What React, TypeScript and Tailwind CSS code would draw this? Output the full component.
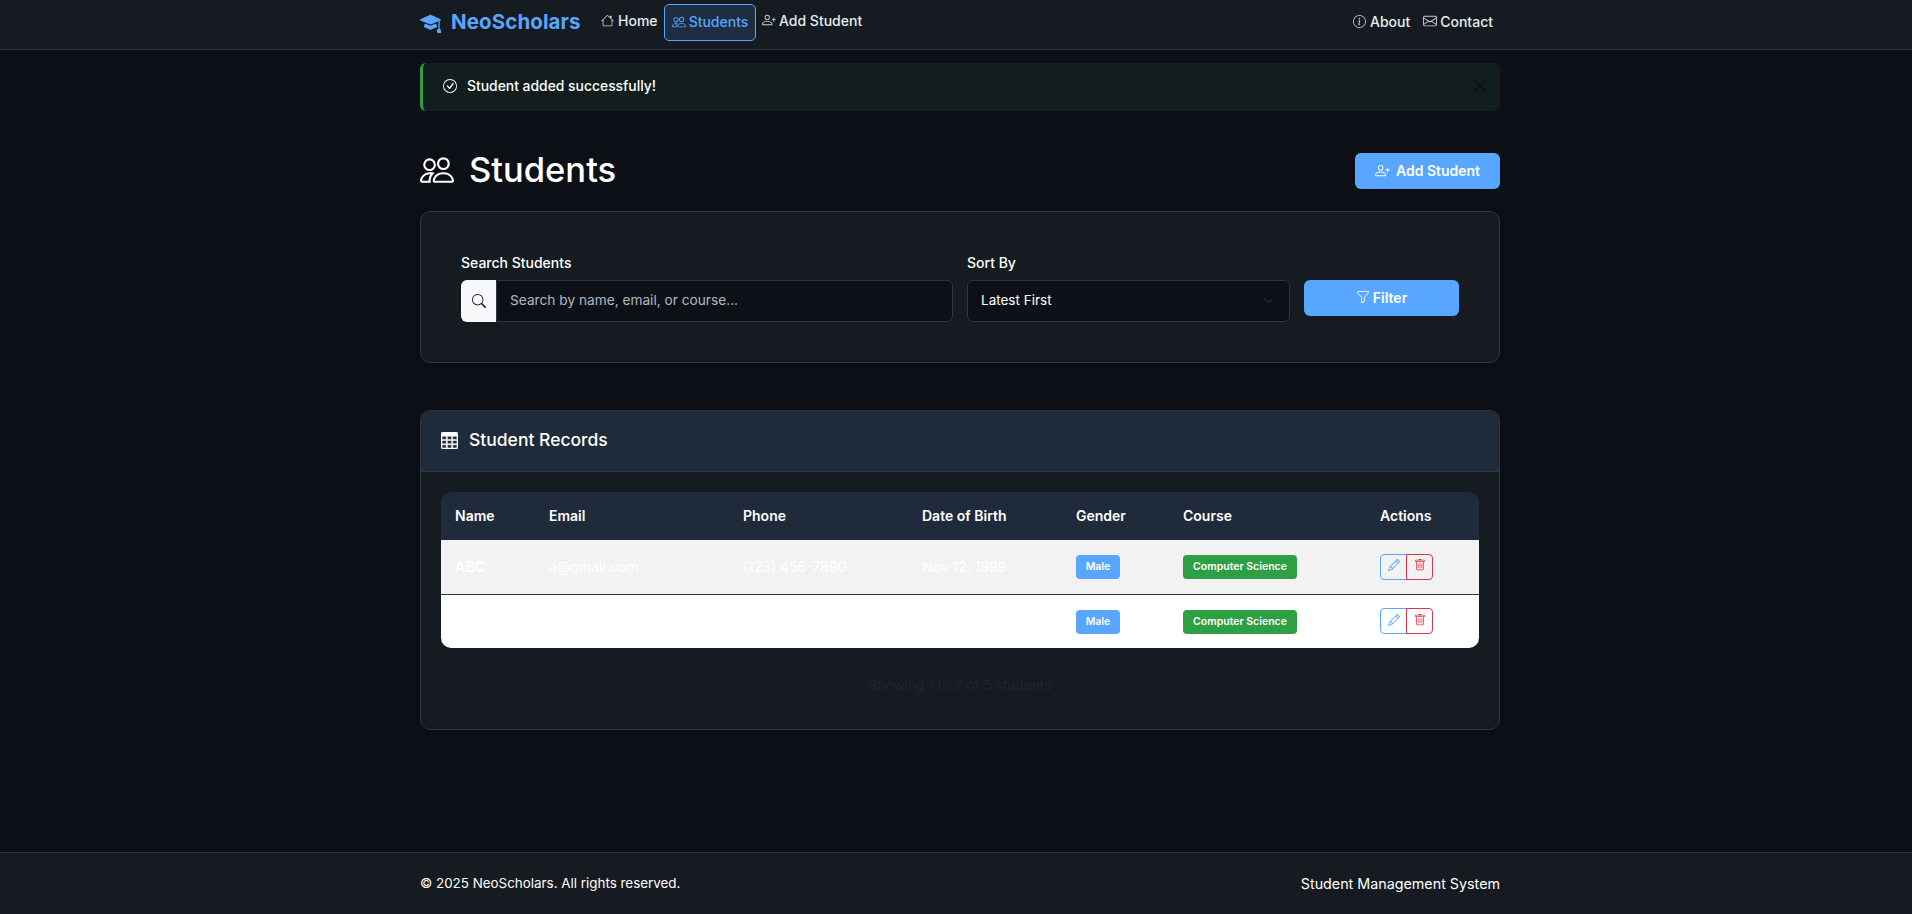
import {
  BsCheckCircle,
  BsChevronDown,
  BsEnvelope,
  BsFunnel,
  BsHouse,
  BsInfoCircle,
  BsMortarboardFill,
  BsPencil,
  BsPeople,
  BsPersonPlus,
  BsSearch,
  BsTable,
  BsTrash,
  BsX,
} from 'react-icons/bs';

const students = [
  { name: 'ABC', email: 'a@gmail.com', phone: '(123) 456-7890', dob: 'Nov 12, 1999', bg: 'bg-[#f2f2f2]' },
  { name: '', email: '', phone: '', dob: '', bg: 'bg-white' },
];

function Actions() {
  return (
    <div className="flex">
      <button className="flex h-[26px] w-[27px] items-center justify-center rounded-l-[4px] border border-[#58a6ff] pb-[3px] text-[#58a6ff]">
        <BsPencil size={12} />
      </button>
      <button className="-ml-px flex h-[26px] w-[27px] items-center justify-center rounded-r-[4px] border border-[#dc3545] pb-[3px] text-[#dc3545]">
        <BsTrash size={12} />
      </button>
    </div>
  );
}

export default function App() {
  return (
    <div className="flex min-h-screen flex-col bg-[#0d1117] font-['Inter',sans-serif] text-white">
      <nav className="h-[50px] border-b border-[#30363d] bg-[#161b22]">
        <div className="ml-[420px] flex h-[49px] w-[1080px] items-center pb-[4px]">
          <BsMortarboardFill size={21} className="text-[#58a6ff]" />
          <span className="ml-[10px] w-[129px] text-[20.5px] font-bold tracking-[0.1px] text-[#58a6ff]">NeoScholars</span>
          <div className="ml-[21px] flex items-center text-[14px] font-medium text-[#e6edf3]">
            <a className="mb-[5px] flex w-[63px] items-center gap-[4px]">
              <BsHouse size={13} className="text-[#c9d1d9]" />
              Home
            </a>
            <a className="flex h-[37px] w-[92px] items-center justify-center gap-[3px] rounded-[5px] border border-[#58a6ff] bg-[#1f2d42] pb-[2px] text-[#58a6ff]">
              <BsPeople size={14} />
              Students
            </a>
            <a className="mb-[5px] ml-[6px] flex items-center gap-[3px]">
              <BsPersonPlus size={14} className="text-[#c9d1d9]" />
              Add Student
            </a>
          </div>
          <div className="ml-auto flex items-center gap-[13px] pb-[3px] pr-[7px] text-[14px] font-medium text-[#e6edf3]">
            <a className="flex items-center gap-[4px]">
              <BsInfoCircle size={13} className="text-[#c9d1d9]" />
              About
            </a>
            <a className="flex items-center gap-[3px]">
              <BsEnvelope size={14} className="text-[#c9d1d9]" />
              Contact
            </a>
          </div>
        </div>
      </nav>

      <main className="ml-[420px] w-[1080px] flex-1">
        <div className="mt-[13px] flex h-[48px] items-center rounded-[6px] border-l-[3px] border-[#2ea043] bg-[#121d1e] pb-[2px] pl-[20px] pr-[5px] text-[13.9px] font-medium">
          <BsCheckCircle size={14} />
          <span className="ml-[10px]">Student added successfully!</span>
          <BsX size={30} className="ml-auto text-[#0b1512]" />
        </div>

        <div className="mt-[42px] flex h-[36px] items-center justify-between">
          <h1 className="mb-[2px] flex items-center gap-[15px] text-[34.5px] font-medium">
            <BsPeople size={34} />
            Students
          </h1>
          <button className="flex h-[36px] w-[145px] items-center justify-center gap-[6px] rounded-[6px] bg-[#58a6ff] pb-[2px] text-[14px] font-semibold">
            <BsPersonPlus size={15} />
            Add Student
          </button>
        </div>

        <section className="mt-[22px] flex h-[152px] gap-[14px] rounded-[10px] border border-[#30363d] bg-[#161b22] pl-[40px] pr-[40px] pt-[41px] shadow-[0_4px_12px_rgba(0,0,0,0.3)]">
          <div className="w-[492px]">
            <label className="block text-[14px] font-medium leading-[20px]">Search Students</label>
            <div className="mt-[7px] flex h-[42px]">
              <div className="flex w-[35px] items-center justify-center rounded-l-[6px] bg-[#f8f9fa] text-[#212529]">
                <BsSearch size={14} />
              </div>
              <div className="flex flex-1 items-center rounded-r-[6px] border border-[#30363d] bg-[#0d1117] pb-[2px] pl-[13px] text-[13.7px] text-[#b1b8c0]">
                Search by name, email, or course...
              </div>
            </div>
          </div>
          <div className="w-[323px]">
            <label className="block text-[14px] font-medium leading-[20px]">Sort By</label>
            <div className="mt-[7px] flex h-[42px] items-center justify-between rounded-[6px] border border-[#30363d] bg-[#0d1117] pb-[2px] pl-[13px] pr-[15px] text-[13.5px]">
              Latest First
              <BsChevronDown size={11} className="text-[#343a40]" />
            </div>
          </div>
          <button className="mt-[27px] flex h-[36px] w-[155px] items-center justify-center gap-[3px] rounded-[6px] bg-[#58a6ff] pb-[2px] text-[14px] font-semibold">
            <BsFunnel size={14} />
            Filter
          </button>
        </section>

        <section className="mt-[47px] h-[320px] overflow-hidden rounded-[10px] border border-[#30363d] bg-[#161b22] shadow-[0_4px_12px_rgba(0,0,0,0.3)]">
          <div className="flex h-[61px] items-center gap-[11px] border-b border-[#30363d] bg-[#1f2a3b] pb-[1px] pl-[20px] text-[17.5px] font-medium">
            <BsTable size={17} className="mb-[1px] stroke-current stroke-[0.5]" />
            Student Records
          </div>
          <div className="px-[20px] pt-[20px]">
            <div className="overflow-hidden rounded-[10px]">
              <table className="w-full table-fixed border-collapse text-left text-[14px]">
                <colgroup>
                  <col className="w-[94px]" />
                  <col className="w-[194px]" />
                  <col className="w-[179px]" />
                  <col className="w-[154px]" />
                  <col className="w-[107px]" />
                  <col className="w-[197px]" />
                  <col />
                </colgroup>
                <thead>
                  <tr className="h-[48px] bg-[#1f2a3b]">
                    <th className="px-[14px] pb-[2px] font-semibold">Name</th>
                    <th className="px-[14px] pb-[2px] font-semibold">Email</th>
                    <th className="px-[14px] pb-[2px] font-semibold">Phone</th>
                    <th className="px-[14px] pb-[2px] font-semibold">Date of Birth</th>
                    <th className="px-[14px] pb-[2px] font-semibold">Gender</th>
                    <th className="px-[14px] pb-[2px] font-semibold">Course</th>
                    <th className="px-[14px] pb-[2px] font-semibold">Actions</th>
                  </tr>
                </thead>
                <tbody>
                  {students.map((s, i) => (
                    <tr key={i} className={`${s.bg} h-[54px] ${i === 0 ? 'border-b border-[#30363d]' : ''}`}>
                      <td className="px-[14px] font-bold">{s.name}</td>
                      <td className="px-[14px]">{s.email}</td>
                      <td className="px-[14px]">{s.phone}</td>
                      <td className="px-[14px]">{s.dob}</td>
                      <td className="px-[14px]">
                        <span className="inline-flex h-[24px] w-[44px] items-center justify-center rounded-[4px] bg-[#58a6ff] text-[10.5px] font-semibold">
                          Male
                        </span>
                      </td>
                      <td className="px-[14px]">
                        <span className="inline-flex h-[24px] w-[114px] items-center justify-center rounded-[4px] bg-[#2ea043] text-[10.5px] font-semibold">
                          Computer Science
                        </span>
                      </td>
                      <td className="px-[14px]">
                        <Actions />
                      </td>
                    </tr>
                  ))}
                </tbody>
              </table>
            </div>
            <p className="mt-[27px] text-center text-[13.7px] text-[#1f252e]">Showing 1 to 2 of 5 students</p>
          </div>
        </section>
      </main>

      <footer className="h-[62px] border-t border-[#30363d] bg-[#161b22]">
        <div className="ml-[420px] flex h-full w-[1080px] items-center justify-between">
          <span className="text-[13.4px]">© 2025 NeoScholars. All rights reserved.</span>
          <span className="text-[14.3px]">Student Management System</span>
        </div>
      </footer>
    </div>
  );
}
